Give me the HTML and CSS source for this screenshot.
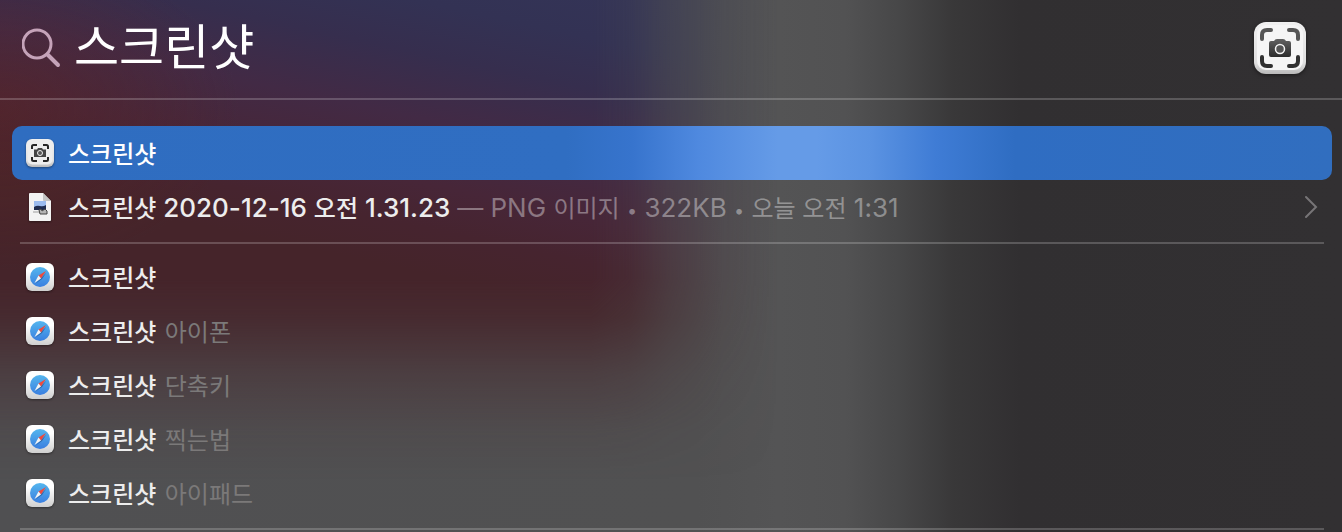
FILE: index.html
```
<!DOCTYPE html>
<html lang="ko">
<head>
    <meta charset="utf-8">
    <title>Spotlight</title>
    <link rel="stylesheet" href="styles.css">
</head>
<body>
<svg class="sprite" width="0" height="0" aria-hidden="true">
    <defs>
        <linearGradient id="tile" x1="0" y1="0" x2="0" y2="1">
            <stop offset="0" stop-color="#f0f0f0"/>
            <stop offset="0.8" stop-color="#dedede"/>
            <stop offset="1" stop-color="#b9b9b9"/>
        </linearGradient>
        <linearGradient id="ink" x1="0" y1="0" x2="0" y2="1">
            <stop offset="0" stop-color="#626262"/>
            <stop offset="1" stop-color="#2c2c2c"/>
        </linearGradient>
        <linearGradient id="white" x1="0" y1="0" x2="0" y2="1">
            <stop offset="0.3" stop-color="#ffffff"/>
            <stop offset="1" stop-color="#cfcfcf"/>
        </linearGradient>
        <linearGradient id="sky" x1="0" y1="0" x2="0" y2="1">
            <stop offset="0" stop-color="#55b6ee"/>
            <stop offset="1" stop-color="#3a7fe0"/>
        </linearGradient>
    </defs>
    <symbol id="icon-shot" viewBox="0 0 52 52">
        <rect width="52" height="52" rx="12" fill="url(#tile)"/>
        <rect x="3" y="3" width="46" height="45" rx="9" fill="#f5f5f5"/>
        <g fill="none" stroke-width="4" stroke-linecap="round">
            <path d="M8 17v-4q0-5 5-5h4M35 8h4q5 0 5 5v4" stroke="#565656"/>
            <path d="M44 35v4q0 5-5 5h-4M17 44h-4q-5 0-5-5v-4" stroke="#303030"/>
        </g>
        <path d="M17 19h3q1-2 3-2h6q2 0 3 2h3q2 0 2 2v12q0 2-2 2H17q-2 0-2-2V21q0-2 2-2z" fill="url(#ink)"/>
        <circle cx="26" cy="27" r="4.500" fill="#555" stroke="#f5f5f5" stroke-width="1.500"/>
    </symbol>
    <symbol id="icon-shot-small" viewBox="0 0 28 28">
        <rect width="28" height="28" rx="6" fill="url(#tile)"/>
        <rect x="1.500" y="1" width="25" height="24.500" rx="5" fill="#ededed"/>
        <path d="M6 10V7.500Q6 6 7.500 6H11M17 6h3.500Q22 6 22 7.500V10M22 18v2.500q0 1.500-1.500 1.500H17M11 22H7.500Q6 22 6 20.500V18" fill="none" stroke="#252525" stroke-width="2"/>
        <path d="M8 10.500h3l1-1.500h4l1 1.500h3V18H8z" fill="#444"/>
        <circle cx="14" cy="14" r="2.500" fill="#555" stroke="#eee"/>
    </symbol>
    <symbol id="icon-png" viewBox="0 0 28 28">
        <path d="M3 1q0-1 1-1h13l8 8v19q0 1-1 1H4q-1 0-1-1z" fill="#f3f3f3"/>
        <path d="M17 0v7q0 1 1 1h7z" fill="#c4c4c4"/>
        <rect x="8" y="8" width="12" height="9" fill="#9bbcf0"/>
        <path d="M8 14q3-2 6-1 3 1 6-1v5H8z" fill="#1f2d50"/>
        <path d="M7 18h8v2H7z" fill="#c9c9c9"/>
        <path d="M13 17l2-1 1 2 3-2 2 2v3h-7z" fill="#b5b5b5" stroke="#444"/>
    </symbol>
    <symbol id="icon-safari" viewBox="0 0 28 28">
        <rect width="28" height="28" rx="6" fill="url(#white)"/>
        <circle cx="14" cy="14" r="10" fill="url(#sky)"/>
        <path d="M20.500 9.500l-4.500 6.500-7 5z" fill="#1d4c86" opacity="0.600"/>
        <path d="M20 8l-7.500 4.500 2.500 3z" fill="#f04a3c"/>
        <path d="M8.500 20l4-7.500 2.500 3z" fill="#f4f4f4"/>
    </symbol>
</svg>

<div class="search-bar">
    <label for="query" class="search-label" aria-label="검색">
        <svg class="search-icon" viewBox="0 0 40 40" aria-hidden="true">
            <circle cx="15" cy="16" r="14"/>
            <path d="M26 27l10 10" class="handle"/>
        </svg>
    </label>
    <input type="text" id="query" class="search-input" value="스크린샷" spellcheck="false">
    <svg class="app-icon"><use href="#icon-shot"/></svg>
</div>

<div class="results">
    <ul class="group">
        <li>
            <button type="button" class="row row-active">
                <svg class="row-icon"><use href="#icon-shot-small"/></svg>
                <span class="title">스크린샷</span>
            </button>
        </li>
        <li>
            <button type="button" class="row">
                <svg class="row-icon"><use href="#icon-png"/></svg>
                <span class="title">스크린샷<span class="latin"> 2020-12-16 </span>오전<span class="latin"> 1.31.23 </span><span class="meta"><span class="latin">— PNG </span>이미지<span class="latin"> <span class="dot">•</span> 322KB <span class="dot">•</span> </span>오늘 오전<span class="latin"> 1:31</span></span></span>
                <svg class="chevron" viewBox="0 0 14 24"><path d="M2 2l10 10L2 22"/></svg>
            </button>
        </li>
    </ul>
    <ul class="group">
        <li>
            <button type="button" class="row">
                <svg class="row-icon"><use href="#icon-safari"/></svg>
                <span class="title">스크린샷</span>
            </button>
        </li>
        <li>
            <button type="button" class="row">
                <svg class="row-icon"><use href="#icon-safari"/></svg>
                <span class="title">스크린샷 <span class="suggest">아이폰</span></span>
            </button>
        </li>
        <li>
            <button type="button" class="row">
                <svg class="row-icon"><use href="#icon-safari"/></svg>
                <span class="title">스크린샷 <span class="suggest">단축키</span></span>
            </button>
        </li>
        <li>
            <button type="button" class="row">
                <svg class="row-icon"><use href="#icon-safari"/></svg>
                <span class="title">스크린샷 <span class="suggest">찍는법</span></span>
            </button>
        </li>
        <li>
            <button type="button" class="row">
                <svg class="row-icon"><use href="#icon-safari"/></svg>
                <span class="title">스크린샷 <span class="suggest">아이패드</span></span>
            </button>
        </li>
    </ul>
</div>
</body>
</html>
```
FILE: styles.css
```
* {
    box-sizing: border-box;
}

html {
    min-height: 100%;
    background: linear-gradient(to right, #505052 0%, #515152 52%, #545455 58%, #525253 63%, #474748 67%, #393839 71%, #312f31 76%, #323032 100%);
}

body {
    margin: 0;
    font-family: Inter, "Noto Sans CJK KR", sans-serif;
    color: #ededed;
}

/* wallpaper showing through the panel */
body::before {
    content: "";
    position: absolute;
    z-index: -1;
    top: 0;
    left: 0;
    width: 58%;
    height: 480px;
    background:
        radial-gradient(ellipse 240px 160px at 0 110px, rgba(96, 36, 34, 0.4), rgba(96, 36, 34, 0)),
        linear-gradient(192deg, #343558 0%, #333254 12%, #362e4e 20%, #422a45 30%, #472638 40%, #46242f 47%, #45242a 54%, #45242a 100%);
    mask-image:
        linear-gradient(to right, #000 76%, rgba(0, 0, 0, 0.85) 81%, rgba(0, 0, 0, 0.5) 86%, rgba(0, 0, 0, 0.15) 93%, transparent 100%),
        linear-gradient(to bottom, #000 58%, rgba(0, 0, 0, 0.85) 66%, rgba(0, 0, 0, 0.4) 78%, rgba(0, 0, 0, 0.1) 90%, transparent 100%);
    mask-composite: intersect;
}

.sprite {
    position: absolute;
}

.search-bar {
    display: flex;
    align-items: center;
    height: 100px;
    padding: 0 36px 2px 22px;
    border-bottom: 2px solid rgba(255, 255, 255, 0.2);
}

.search-label {
    display: flex;
}

.search-icon {
    width: 40px;
    height: 40px;
    fill: none;
    stroke: #c5a3b9;
    stroke-width: 3;
}

.search-icon .handle {
    stroke-width: 4;
    stroke-linecap: round;
}

.search-input {
    flex: 1;
    min-width: 0;
    height: 72px;
    margin-left: 12px;
    padding: 0 0 10px;
    border: none;
    outline: none;
    background: none;
    font-family: inherit;
    font-size: 49px;
    color: #fff;
}

.app-icon {
    width: 52px;
    height: 52px;
    filter: drop-shadow(0 1px 2px rgba(0, 0, 0, 0.5));
}

.results {
    padding: 26px 10px 0 12px;
}

.group {
    list-style: none;
    margin: 0;
    padding: 0;
}

.group::after {
    content: "";
    display: block;
    height: 2px;
    margin: 8px 8px 6px;
    background: rgba(255, 255, 255, 0.2);
}

.group:last-child::after {
    margin-bottom: 0;
}

.row {
    display: flex;
    align-items: center;
    gap: 14px;
    width: 100%;
    height: 54px;
    padding: 0 14px;
    border: none;
    border-radius: 10px;
    background: none;
    font-family: inherit;
    font-size: 24px;
    line-height: 36px;
    color: #ededed;
    text-align: left;
}

.row-active {
    background: linear-gradient(to right, #2f6dc0 0%, #306ec2 42%, #3774cd 47%, #4f89df 52%, #659be7 58%, #659be7 61%, #5b93e2 65%, #3f7cd5 70%, #2f6dc2 76%, #316ebf 100%);
    color: #fff;
}

.row-icon {
    flex: none;
    width: 28px;
    height: 28px;
    filter: drop-shadow(0 1px 1px rgba(0, 0, 0, 0.4));
}

.title {
    flex: 1;
    padding-top: 4px;
    font-weight: 500;
    white-space: nowrap;
}

.latin {
    font-size: 26px;
}

.dot {
    font-size: 18px;
}

.meta {
    font-weight: 400;
    color: rgba(255, 255, 255, 0.38);
}

.suggest {
    padding-left: 2px;
    font-weight: 400;
    color: #7b7979;
}

.chevron {
    flex: none;
    width: 14px;
    height: 24px;
    fill: none;
    stroke: #777577;
    stroke-width: 2;
    stroke-linecap: round;
}
```
